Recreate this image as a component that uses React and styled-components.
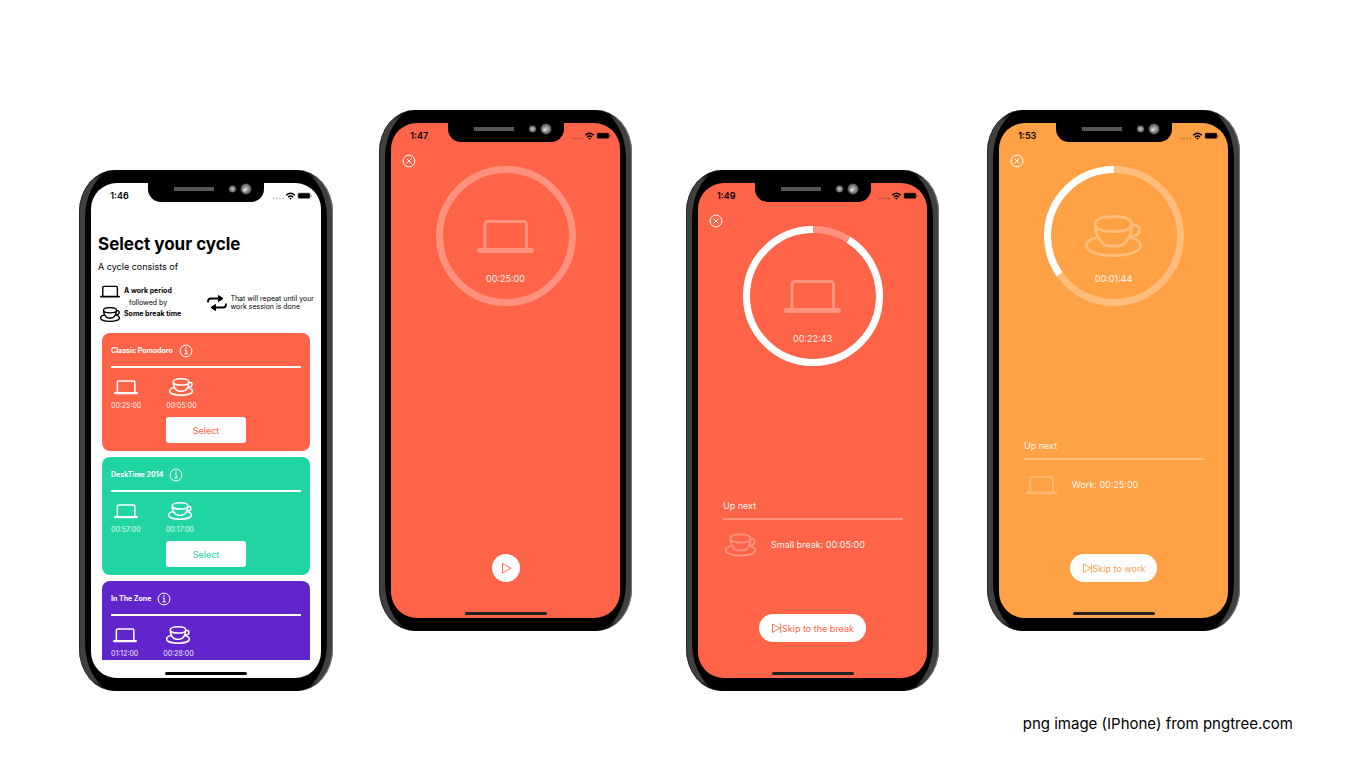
import React from "react";
import styled, { createGlobalStyle } from "styled-components";

const GlobalStyle = createGlobalStyle`
  *, *::before, *::after { box-sizing: border-box; }
  body { margin: 0; background: #fff; color: #000; font-family: Inter, "Liberation Sans", sans-serif; }
  h1, h2, p { margin: 0; }
  button { margin: 0; padding: 0; border: 0; font: inherit; cursor: pointer; }
`;

const tomato = "#ff6448";
const orange = "#ffa144";
const green = "#20d4a4";
const purple = "#6026cc";

const Page = styled.main`
  padding: 110px 73px 0 79px;
`;

const Gallery = styled.div`
  display: flex;
  flex-wrap: wrap;
  justify-content: space-between;
  padding-right: 53px;
`;

const Pair = styled.div`
  display: flex;
  gap: ${(p) => p.$gap}px;
`;

const Caption = styled.p`
  margin-top: 23px;
  text-align: right;
  font-size: 15px;
  line-height: 20px;
`;

const Device = styled.section`
  position: relative;
  width: ${(p) => (p.$wide ? 254 : 253)}px;
  height: 521px;
  margin-top: ${(p) => (p.$lowered ? 60 : 0)}px;
  padding: 13px 12px;
  border-radius: 36px / 42px;
  background: linear-gradient(#000 0 3px, #404040 10px, #404040 calc(100% - 10px), #000 calc(100% - 3px));
  box-shadow: inset 1px 0 #2a2a2a, inset -1px 0 #777;

  &::before {
    content: "";
    position: absolute;
    inset: 0 6px;
    border-radius: 32px / 48px;
    background: #000;
  }
`;

const Screen = styled.div`
  position: relative;
  display: flex;
  flex-direction: column;
  height: 100%;
  overflow: hidden;
  border-radius: 26px;
  background: ${(p) => p.$color};
`;

const StatusBar = styled.div`
  display: grid;
  grid-template-columns: 1fr 116px 1fr;
  height: 25px;
  flex: none;
`;

const Clock = styled.span`
  align-self: center;
  text-align: center;
  font-size: 9px;
  line-height: 12px;
  font-weight: 600;
`;

const Notch = styled.div`
  height: 19px;
  border-radius: 0 0 13px 13px;
  background: #000;
`;

const Signals = styled.div`
  align-self: center;
  display: flex;
  justify-content: flex-end;
  padding-right: 9px;
`;

const HomeBar = styled.div`
  flex: none;
  align-self: center;
  width: 82px;
  height: 3px;
  margin-bottom: 3px;
  border-radius: 2px;
  background: ${(p) => (p.$dark ? "#000" : "#222")};
`;

const Icon = styled.svg`
  display: block;
  flex: none;
  fill: none;
  stroke: currentColor;
  opacity: ${(p) => p.$alpha || 1};
`;

const Laptop = ({ width, height, alpha, stroke = 3 }) => (
  <Icon width={width} height={height} $alpha={alpha} viewBox="0 0 57 42" aria-hidden="true">
    <path d="M8 35V9.500a3 3 0 0 1 3-3H46.500a3 3 0 0 1 3 3V35" strokeWidth={stroke} />
    <rect x="0" y="33" width="57" height="5" rx="2.500" fill="currentColor" stroke="none" />
  </Icon>
);

const Cup = ({ width, height, alpha, stroke = 2.8 }) => (
  <Icon width={width} height={height} $alpha={alpha} viewBox="0 0 57 42" aria-hidden="true">
    <path
      strokeWidth={stroke}
      strokeLinejoin="round"
      d="M10 9C10 4.500 17 1.500 28.500 1.500S47 4.500 47 9S40 16.500 28.500 16.500S10 13.500 10 9C10 21 17 31 24 31H33C40 31 47 21 47 9M46.500 10.500C52 9 54.500 11.500 54.500 15C54.500 19.500 50 21.500 44 21.500M11.500 22.500C5 24 1.500 27 1.500 30.500C1.500 36.500 13 40.500 28.500 40.500C44 40.500 55.500 36.500 55.500 30.500C55.500 27 52 24 44.500 22"
    />
  </Icon>
);

const Speaker = () => (
  <svg width="116" height="19" viewBox="0 0 116 19" aria-hidden="true">
    <defs>
      <radialGradient id="lens" cx="0.5" cy="0.5" r="0.5">
        <stop offset="0" stopColor="#ccc" />
        <stop offset="0.4" stopColor="#999" />
        <stop offset="0.8" stopColor="#666" />
        <stop offset="1" stopColor="#222" />
      </radialGradient>
    </defs>
    <rect x="26" y="4" width="40" height="4" fill="#505050" />
    <path d="M26 6H66" stroke="#5c5c5c" strokeWidth="4" strokeDasharray="1 1" />
    <circle cx="84.500" cy="6" r="3.800" fill="url(#lens)" />
    <circle cx="98" cy="6" r="5.700" fill="url(#lens)" />
    <circle cx="96.500" cy="7" r="1.500" fill="#ddd" />
  </svg>
);

const Status = ({ time }) => (
  <StatusBar>
    <Clock>{time}</Clock>
    <Notch>
      <Speaker />
    </Notch>
    <Signals>
      <svg width="40" height="8" viewBox="0 0 40 8" aria-hidden="true">
        <path d="M1 6.500H12" stroke="#000" strokeOpacity="0.22" strokeWidth="1.400" strokeDasharray="2 1" />
        <path d="M14.200 3.200Q18.500 -0.600 22.800 3.200M16 5.100Q18.500 3 21 5.100" fill="none" stroke="#000" strokeWidth="1.400" />
        <path d="M17.200 6.200Q18.500 5.200 19.800 6.200L18.500 7.700Z" />
        <rect x="25.500" y="0.500" width="13" height="6.500" rx="1.500" fillOpacity="0.3" />
        <rect x="26.200" y="1.200" width="11.600" height="5.100" rx="1" />
        <path d="M39.300 3V5" stroke="#000" strokeOpacity="0.5" strokeWidth="0.800" />
      </svg>
    </Signals>
  </StatusBar>
);

const Intro = styled.header`
  padding: 24px 7px 0;
`;

const Title = styled.h1`
  font-size: 17px;
  line-height: 24px;
  font-weight: 700;
`;

const Subtitle = styled.p`
  margin-top: 4px;
  font-size: 9px;
  line-height: 14px;
`;

const Legend = styled.div`
  display: flex;
  justify-content: space-between;
  align-items: center;
  margin: 10px 0 0 2px;
  font-size: 7px;
  line-height: 8px;
  white-space: nowrap;
`;

const LegendList = styled.div`
  display: grid;
  grid-template-columns: 20px auto;
  align-items: center;
  column-gap: 4px;
  grid-template-rows: 14px 9px 14px;
`;

const Link = styled.span`
  grid-column: 2;
  padding-left: 5px;
`;

const RepeatNote = styled.div`
  display: flex;
  align-items: center;
  gap: 3px;
`;

const Cards = styled.div`
  flex: 1;
  min-height: 0;
  overflow: hidden;
  display: flex;
  flex-direction: column;
  gap: 6px;
  margin: 12px 11px 12px 11px;
`;

const Card = styled.article`
  flex: none;
  display: flex;
  flex-direction: column;
  height: 118px;
  padding: 10px 9px 8px;
  border-radius: 8px;
  color: #fff;
  background: ${(p) => p.$color};
`;

const CardHead = styled.div`
  display: flex;
  align-items: center;
  gap: 6px;
  height: 16px;
`;

const CardTitle = styled.h2`
  font-size: 7px;
  line-height: 10px;
  font-weight: 700;
`;

const IconButton = styled.button`
  display: block;
  background: transparent;
  color: #fff;
`;

const Rule = styled.hr`
  width: 100%;
  height: 2px;
  margin: ${(p) => p.$space}px 0 0;
  border: 0;
  background: ${(p) => (p.$faint ? "rgba(255,255,255,.3)" : "#fff")};
`;

const Periods = styled.div`
  display: flex;
  gap: 25px;
  margin-top: 10px;
`;

const Period = styled.div`
  display: flex;
  flex-direction: column;
  align-items: center;
  gap: 5px;
  font-size: 7px;
  line-height: 10px;
  color: #fff;
`;

const Duration = styled.span`
  opacity: 0.9;
`;

const SelectButton = styled.button`
  align-self: center;
  width: 80px;
  height: 26px;
  margin-top: auto;
  border-radius: 3px;
  background: #fff;
  color: ${(p) => p.$color};
  font-size: 9px;
`;

const InfoIcon = () => (
  <Icon width="14" height="14" viewBox="0 0 14 14" aria-hidden="true">
    <circle cx="7" cy="7" r="5.900" />
    <path d="M5.700 6H7.200V9.700M5.400 9.800H8.800" />
    <circle cx="7" cy="4" r="0.800" fill="currentColor" stroke="none" />
  </Icon>
);

const cycles = [
  { name: "Classic Pomodoro", color: tomato, work: "00:25:00", rest: "00:05:00", selectable: true },
  { name: "DeskTime 2014", color: green, work: "00:57:00", rest: "00:17:00", selectable: true },
  { name: "In The Zone", color: purple, work: "01:12:00", rest: "00:28:00", selectable: false },
];

const CycleCard = ({ cycle }) => (
  <Card $color={cycle.color}>
    <CardHead>
      <CardTitle>{cycle.name}</CardTitle>
      <IconButton aria-label={`About ${cycle.name}`}>
        <InfoIcon />
      </IconButton>
    </CardHead>
    <Rule $space={7} />
    <Periods>
      <Period>
        <Laptop width={24} height={18} stroke={3.6} />
        <Duration>{cycle.work}</Duration>
      </Period>
      <Period>
        <Cup width={24} height={18} stroke={3.6} />
        <Duration>{cycle.rest}</Duration>
      </Period>
    </Periods>
    {cycle.selectable && <SelectButton $color={cycle.color}>Select</SelectButton>}
  </Card>
);

const SelectScreen = () => (
  <Screen $color="#fff">
    <Status time="1:46" />
    <Intro>
      <Title>Select your cycle</Title>
      <Subtitle>A cycle consists of</Subtitle>
      <Legend>
        <LegendList>
          <Laptop width={20} height={15} stroke={4} />
          <b>A work period</b>
          <Link>followed by</Link>
          <Cup width={20} height={15} stroke={4} />
          <b>Some break time</b>
        </LegendList>
        <RepeatNote>
          <Icon width="20" height="16" viewBox="0 0 20 16" aria-hidden="true">
            <path d="M1 7.500V6.500Q1 3.500 4 3.500H13M19 8.500V9.500Q19 12.500 16 12.500H7" strokeWidth="1.800" />
            <path d="M11.500 0.500L16 3.500L11.500 6.500ZM8.500 9.500L4 12.500L8.500 15.500Z" fill="currentColor" strokeLinejoin="round" />
          </Icon>
          <p>
            That will repeat until your
            <br />
            work session is done
          </p>
        </RepeatNote>
      </Legend>
    </Intro>
    <Cards>
      {cycles.map((c) => (
        <CycleCard key={c.name} cycle={c} />
      ))}
    </Cards>
    <HomeBar $dark />
  </Screen>
);

const TimerArea = styled.div`
  display: grid;
  grid-template-columns: 1fr auto 1fr;
  padding-top: 6px;
`;

const CloseButton = styled(IconButton)`
  justify-self: start;
  align-self: start;
  margin-left: 11px;
`;

const Dial = styled.div`
  display: grid;
  margin-top: 12px;
  color: #fff;

  & > * {
    grid-area: 1 / 1;
  }
`;

const DialFace = styled.div`
  display: flex;
  flex-direction: column;
  align-items: center;
  gap: 15px;
  padding-top: 49px;
  font-size: 9px;
  line-height: 14px;
`;

const Upcoming = styled.section`
  margin: 133px 24px 0 25px;
  color: #fff;
  font-size: 9px;
  line-height: 14px;
`;

const NextRow = styled.div`
  display: flex;
  align-items: center;
  gap: 15px;
  height: 24px;
  margin-top: 13px;
  padding-left: 2px;
`;

const ActionButton = styled.button`
  align-self: center;
  display: flex;
  align-items: center;
  justify-content: center;
  height: 28px;
  min-width: 28px;
  margin: auto 0 30px;
  padding: 0 ${(p) => (p.$round ? 0 : 12)}px;
  border-radius: 14px;
  background: #fff;
  color: ${(p) => p.$color};
  font-size: 9px;
  white-space: nowrap;
`;

const circumference = 2 * Math.PI * 66.5;

const TimerScreen = ({ clock, color, mode, left, progress, next, action }) => {
  const Picture = mode === "work" ? Laptop : Cup;
  return (
    <Screen $color={color}>
      <Status time={clock} />
      <TimerArea>
        <CloseButton aria-label="Close">
          <Icon width="14" height="14" viewBox="0 0 14 14" aria-hidden="true">
            <circle cx="7" cy="7" r="5.900" />
            <path d="M4.600 4.600L9.400 9.400M9.400 4.600L4.600 9.400" />
          </Icon>
        </CloseButton>
        <Dial>
          <Icon width="140" height="140" viewBox="0 0 140 140" strokeWidth="7" aria-hidden="true">
            <circle cx="70" cy="70" r="66.500" strokeOpacity="0.3" />
            {progress > 0 && (
              <circle
                cx="70"
                cy="70"
                r="66.500"
                strokeDasharray={`${progress * circumference} ${circumference}`}
                transform="translate(0 140) scale(1 -1) rotate(90 70 70)"
              />
            )}
          </Icon>
          <DialFace>
            <Picture width={57} height={42} alpha={0.3} />
            <Duration>{left}</Duration>
          </DialFace>
        </Dial>
      </TimerArea>
      {next && (
        <Upcoming>
          <Duration>Up next</Duration>
          <Rule $faint $space={5} />
          <NextRow>
            {next.mode === "work" ? (
              <Laptop width={31} height={24} alpha={0.25} stroke={3.4} />
            ) : (
              <Cup width={31} height={24} alpha={0.3} stroke={3.4} />
            )}
            <Duration>{next.label}</Duration>
          </NextRow>
        </Upcoming>
      )}
      {action ? (
        <ActionButton $color={color}>
          <Icon width="11" height="12" viewBox="0 0 11 12" strokeWidth="0.900" aria-hidden="true">
            <path d="M1.500 2V10.500L9 6.200ZM9.700 1.500V11" strokeLinejoin="round" />
          </Icon>
          {action}
        </ActionButton>
      ) : (
        <ActionButton $color={color} $round aria-label="Start">
          <Icon width="12" height="12" viewBox="0 0 12 12" strokeWidth="0.900" aria-hidden="true">
            <path d="M2.500 1.500V11L11 6.200Z" strokeLinejoin="round" />
          </Icon>
        </ActionButton>
      )}
      <HomeBar />
    </Screen>
  );
};

export default function App() {
  return (
    <Page>
      <GlobalStyle />
      <Gallery>
        <Pair $gap={46}>
          <Device $wide $lowered>
            <SelectScreen />
          </Device>
          <Device>
            <TimerScreen clock="1:47" color={tomato} mode="work" left="00:25:00" progress={0} />
          </Device>
        </Pair>
        <Pair $gap={48}>
          <Device $lowered>
            <TimerScreen
              clock="1:49"
              color={tomato}
              mode="work"
              left="00:22:43"
              progress={1363 / 1500}
              next={{ mode: "break", label: "Small break: 00:05:00" }}
              action="Skip to the break"
            />
          </Device>
          <Device>
            <TimerScreen
              clock="1:53"
              color={orange}
              mode="break"
              left="00:01:44"
              progress={104 / 300}
              next={{ mode: "work", label: "Work: 00:25:00" }}
              action="Skip to work"
            />
          </Device>
        </Pair>
      </Gallery>
      <Caption>png image (IPhone) from pngtree.com</Caption>
    </Page>
  );
}
